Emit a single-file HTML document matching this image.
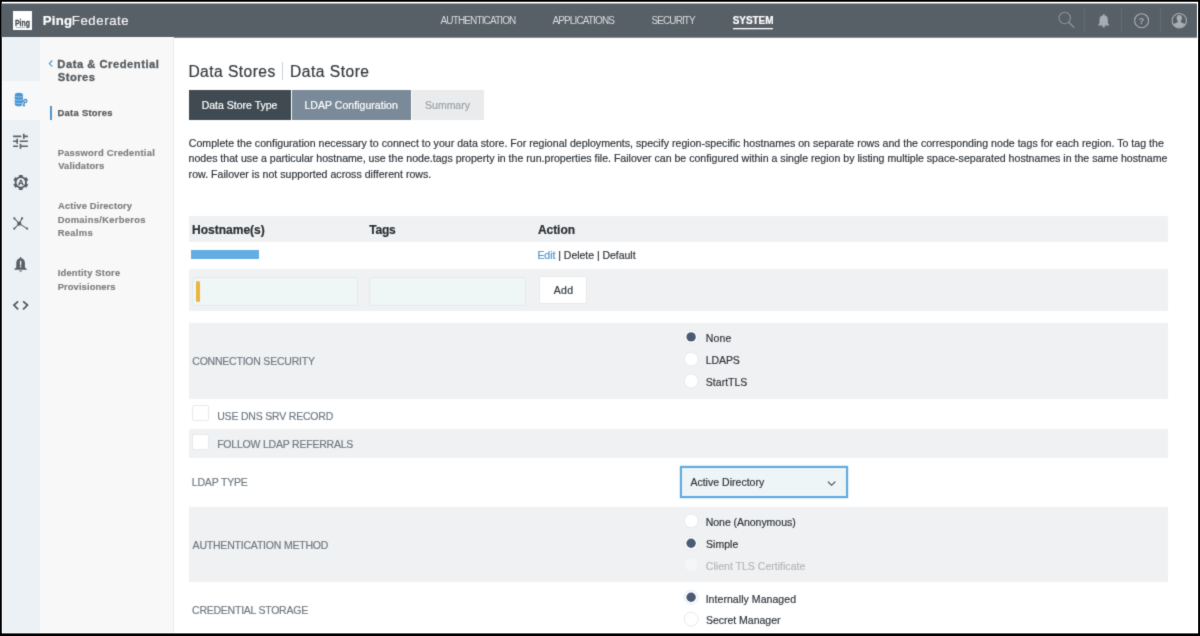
<!DOCTYPE html>
<html lang="en">
<head>
<meta charset="utf-8">
<title>PingFederate - Data Store</title>
<style>
*{box-sizing:border-box;margin:0;padding:0}
html,body{width:1200px;height:636px;overflow:hidden;background:#000}
body{font-family:"Liberation Sans",sans-serif;color:#3b434b;position:relative}
.frame{position:absolute;left:2px;top:2px;width:1196px;height:631px;background:#fff;overflow:hidden;box-shadow:-1px 0 0 rgba(255,255,255,.25),0 -1px 0 rgba(255,255,255,.25),1px 0 0 rgba(255,255,255,.15),0 1px 0 rgba(255,255,255,.4)}
.pg{position:absolute;left:-2px;top:-2px;width:1200px;height:636px;will-change:transform;background:#fff;filter:url(#soft)}
.abs{position:absolute}
.t{position:absolute;white-space:nowrap;line-height:1;-webkit-text-stroke-width:.18px}
.row{position:absolute;left:189px;width:979px;background:#f0f1f2}
.cb{position:absolute;width:16.400px;height:16px;background:#fff;border:1px solid #e6e9eb;border-radius:2px}
.inp{position:absolute;height:29.500px;background:#eff6f6;border:1px solid #e4eaec;border-radius:3px}
.tab{position:absolute;top:90px;height:30px}
.vsep{position:absolute;top:8px;width:1px;height:25px;background:#636b73}
</style>
</head>
<body>
<svg width="0" height="0" style="position:absolute"><defs><filter id="soft" x="0" y="0" width="100%" height="100%" color-interpolation-filters="sRGB"><feConvolveMatrix order="3" kernelMatrix="0.02 0.09 0.02 0.09 0.56 0.09 0.02 0.09 0.02" divisor="1" edgeMode="duplicate" preserveAlpha="true"/></filter></defs></svg>
<div class="frame"><div class="pg">
  <!-- header bar -->
  <div class="abs" style="left:0;top:4px;width:1197px;height:33px;background:#575f67;box-shadow:0 -1px 0 rgba(87,95,103,.5),0 1px 0 rgba(87,95,103,.7)"></div>
  <div class="abs" style="left:13px;top:11px;width:19px;height:19px;background:#fff;overflow:hidden">
    <div class="t" style="left:2px;top:6.500px;font-size:9.600px;font-weight:bold;color:#3f474f;-webkit-text-stroke-width:.3px;transform:scaleX(.72);transform-origin:0 0">Ping</div>
    <div class="abs" style="left:3px;top:16.300px;width:8.500px;height:1px;background:#b3b8bd"></div>
  </div>
  <div class="abs" style="left:733px;top:28px;width:40px;height:1px;background:#fff;box-shadow:0 1px 0 rgba(255,255,255,.3)"></div>
  <div class="vsep" style="left:1083.500px"></div>
  <div class="vsep" style="left:1121.200px"></div>
  <div class="vsep" style="left:1160.200px"></div>
  <svg class="abs" style="left:1050px;top:4px" width="146" height="33" viewBox="1050 4 146 33" fill="none">
    <circle cx="1064.700" cy="18" r="5.700" stroke="#8d949a" stroke-width="1.100"/>
    <path d="M1068.800 22.200L1073.800 27.200" stroke="#8d949a" stroke-width="1.300" stroke-linecap="round"/>
    <path d="M1103.700 15.200c-2.700 0-4.200 2-4.200 4.700v3.200l-1.600 2.300h11.600l-1.600-2.300v-3.200c0-2.700-1.500-4.700-4.200-4.700z" fill="#a7adb2"/>
    <rect x="1103" y="13.900" width="1.400" height="2.200" rx=".7" fill="#a7adb2"/>
    <circle cx="1103.700" cy="26.300" r="1.300" fill="#a7adb2"/>
    <circle cx="1141.600" cy="20.700" r="7" stroke="#a7adb2" stroke-width="1.100"/>
    <text x="1141.600" y="24" font-family="Liberation Sans, sans-serif" font-size="9" font-weight="bold" fill="#a7adb2" text-anchor="middle">?</text>
    <circle cx="1179.300" cy="20.700" r="7.200" stroke="#a7adb2" stroke-width="1.100"/>
    <path d="M1179.300 15.100c1.700 0 2.700 1.200 2.700 2.900 0 1.200-.5 2.300-1.200 2.900v1c.3.500 1.900.9 3.400 1.700.5.300.8.700.9 1.100-1.300 1.700-3.400 2.800-5.800 2.800s-4.500-1.100-5.800-2.800c.1-.4.400-.8.900-1.100 1.500-.8 3.100-1.200 3.400-1.700v-1c-.7-.6-1.200-1.700-1.200-2.900 0-1.700 1-2.900 2.700-2.900z" fill="#a7adb2"/>
  </svg>

  <!-- rail + side nav backgrounds -->
  <div class="abs" style="left:0;top:37.400px;width:39.500px;height:600px;background:#ebf1f5"></div>
  <div class="abs" style="left:0;top:80.500px;width:39.500px;height:39px;background:#f7f8f9"></div>
  <div class="abs" style="left:39.500px;top:37.400px;width:134.200px;height:600px;background:#f8f8f8;border-right:1.400px solid #ececec"></div>

  <!-- rail icons (page coords) -->
  <svg class="abs" style="left:0;top:80px" width="40" height="240" viewBox="0 80 40 240" fill="none">
    <path d="M14.800 94.700c0-1.050 1.850-1.900 4.100-1.900s4.100.85 4.100 1.900v9.700c0 1.050-1.850 1.900-4.100 1.900s-4.100-.85-4.100-1.900z" fill="#4696d3"/>
    <g stroke="#b5d7f1" stroke-width=".75" fill="none">
      <path d="M14.800 95.700c.4.800 2 1.300 4.100 1.300s3.700-.5 4.100-1.300"/>
      <path d="M14.800 99c.4.800 2 1.300 4.100 1.300s3.700-.5 4.100-1.300"/>
      <path d="M14.800 102.300c.4.800 2 1.300 4.100 1.300s3.700-.5 4.100-1.300"/>
    </g>
    <circle cx="25.300" cy="100.900" r="2.300" fill="#f7f8f9"/>
    <path d="M24.600 102.200l-2.100 4.600" stroke="#f7f8f9" stroke-width="2.600"/>
    <circle cx="25.300" cy="100.900" r="1.550" stroke="#4588c2" stroke-width="1.250"/>
    <path d="M24.600 102.300l-1.400 3.900M23.500 105.200l1.500.6" stroke="#4588c2" stroke-width="1.250"/>

    <!-- tune (sliders) -->
    <g transform="translate(10.600 131.400) scale(.823)">
      <path d="M3 17v2h6v-2H3zM3 5v2h10V5H3zm10 16v-2h8v-2h-8v-2h-2v6h2zM7 9v2H3v2h4v2h2V9H7zm14 4v-2H11v2h10zm-6-4h2V7h4V5h-4V3h-2v6z" fill="#5b6065"/>
    </g>

    <!-- gear with A -->
    <g transform="translate(20.800,182.400)">
      <circle r="5.200" stroke="#575c61" stroke-width="1.800"/>
      <g fill="#575c61">
        <rect x="-1.900" y="-7.500" width="3.800" height="2.400" rx=".4"/>
        <rect x="-1.900" y="-7.500" width="3.800" height="2.400" rx=".4" transform="rotate(60)"/>
        <rect x="-1.900" y="-7.500" width="3.800" height="2.400" rx=".4" transform="rotate(120)"/>
        <rect x="-1.900" y="-7.500" width="3.800" height="2.400" rx=".4" transform="rotate(180)"/>
        <rect x="-1.900" y="-7.500" width="3.800" height="2.400" rx=".4" transform="rotate(240)"/>
        <rect x="-1.900" y="-7.500" width="3.800" height="2.400" rx=".4" transform="rotate(300)"/>
      </g>
      <text x="0" y="3" font-family="Liberation Sans, sans-serif" font-size="8" font-weight="bold" fill="#575c61" stroke="#575c61" stroke-width=".3" text-anchor="middle">A</text>
    </g>

    <!-- network -->
    <g stroke="#575c61" stroke-width="1.050" stroke-linecap="round">
      <path d="M14.300 218.300L19.300 223.600M22.100 218.300L19.300 223.600M14.300 228.600L19.300 223.600M27.100 228.600L19.300 223.600"/>
    </g>
    <rect x="17.400" y="221.700" width="3.800" height="3.800" rx="1.200" fill="#575c61"/>
    <circle cx="14.300" cy="218.300" r="1.100" fill="#575c61"/><circle cx="22.100" cy="218.300" r="1.100" fill="#575c61"/>
    <circle cx="14.300" cy="228.600" r="1.100" fill="#575c61"/><circle cx="27.100" cy="228.600" r="1.100" fill="#575c61"/>

    <!-- bell alert -->
    <path d="M20.600 258.300c-2.700 0-4.300 2.100-4.300 4.700v4.500l-1.900 1.500v.700h12.400v-.7l-1.900-1.500v-4.500c0-2.600-1.600-4.700-4.300-4.700z" fill="#575c61"/>
    <rect x="19.900" y="257.100" width="1.400" height="2" rx=".7" fill="#575c61"/>
    <path d="M19.300 270.400h2.600c0 .8-.6 1.300-1.300 1.300s-1.300-.5-1.300-1.300z" fill="#575c61"/>
    <rect x="19.850" y="260.800" width="1.500" height="4.600" fill="#ebf1f5"/><rect x="19.850" y="266.100" width="1.500" height="1.300" fill="#ebf1f5"/>

    <!-- code -->
    <path d="M18.100 301.300L13.900 305.100 18.100 309.400M23.100 301.300L27.500 305.100 23.100 309.400" stroke="#4b5054" stroke-width="1.600"/>
  </svg>

  <!-- side nav decorations -->
  <svg class="abs" style="left:47px;top:59px" width="8" height="10" viewBox="47 59 8 10" fill="none"><path d="M52.300 60.500L49.300 63.600l3 3.100" stroke="#4a97d2" stroke-width="1.100"/></svg>
  <div class="abs" style="left:50.300px;top:106px;width:1.700px;height:13.500px;background:#4a97d2"></div>

  <!-- title separator -->
  <div class="abs" style="left:282.300px;top:61.700px;width:1.100px;height:18.300px;background:#cdd1d4"></div>

  <!-- tabs -->
  <div class="tab" style="left:188.800px;width:102.400px;background:#3f4a52"></div>
  <div class="tab" style="left:291.800px;width:119.200px;background:#7a8a99"></div>
  <div class="tab" style="left:411.600px;width:72.200px;background:#e9ebec"></div>

  <!-- table -->
  <div class="row" style="top:216px;height:26px"></div>
  <div class="abs" style="left:190.500px;top:250.300px;width:68.400px;height:8.800px;background:#63ade3"></div>
  <div class="row" style="top:269px;height:42px"></div>
  <div class="inp" style="left:192.300px;top:276.900px;width:165.400px"></div>
  <div class="abs" style="left:196.400px;top:281.100px;width:3.500px;height:21.100px;background:#edb53d;border-radius:1.500px"></div>
  <div class="inp" style="left:369.200px;top:276.900px;width:157.100px"></div>
  <div class="abs" style="left:538.700px;top:276.200px;width:48.800px;height:27.600px;background:#fff;border:1px solid #e7e9ea;border-radius:2px"></div>

  <!-- form rows -->
  <div class="row" style="top:323px;height:76px"></div>

  <div class="cb" style="left:192.200px;top:404.500px"></div>
  <div class="row" style="top:429px;height:29px"></div>
  <div class="cb" style="left:192.200px;top:433.500px"></div>

  <div class="abs" style="left:680px;top:466.300px;width:168.200px;height:31.700px;background:#eef5f6;border:2px solid #60aade;box-shadow:0 0 1.500px #8fc3ea"></div>
  <svg class="abs" style="left:826px;top:479px" width="12" height="9" viewBox="826 479 12 9" fill="none"><path d="M827.900 481.600L831.600 485.300 835.300 481.600" stroke="#3b434b" stroke-width="1.100"/></svg>

  <div class="row" style="top:507px;height:75px"></div>

  <svg class="abs" style="left:680px;top:320px" width="24" height="312" viewBox="680 320 24 312" fill="none">
    <circle cx="691.2" cy="336.9" r="6.900" fill="#fff" stroke="#dce7ef" stroke-width=".9"/><circle cx="691.1" cy="336.9" r="4.700" fill="#4a5b73"/>
    <circle cx="691.2" cy="359.1" r="6.900" fill="#fff" stroke="#e4e6e8" stroke-width=".9"/>
    <circle cx="691.2" cy="381.0" r="6.900" fill="#fff" stroke="#e4e6e8" stroke-width=".9"/>
    <circle cx="691.2" cy="520.9" r="6.900" fill="#fff" stroke="#e4e6e8" stroke-width=".9"/>
    <circle cx="691.2" cy="543.3" r="6.900" fill="#fff" stroke="#dce7ef" stroke-width=".9"/><circle cx="691.1" cy="543.3" r="4.700" fill="#4a5b73"/>
    <circle cx="691.2" cy="564.8" r="6.900" fill="#f5f6f7" stroke="#edeff0" stroke-width=".9"/>
    <circle cx="691.2" cy="597.3" r="6.900" fill="#fff" stroke="#dce7ef" stroke-width=".9"/><circle cx="691.1" cy="597.3" r="4.700" fill="#4a5b73"/>
    <circle cx="691.2" cy="619.1" r="6.900" fill="#fff" stroke="#e4e6e8" stroke-width=".9"/>
  </svg>
  <!-- text -->
<div class="t" style="left:42.87px;top:14.00px;font-size:13.2px;color:#fff;letter-spacing:0.215px;font-weight:bold">Ping</div>
<div class="t" style="left:71.82px;top:14.00px;font-size:13.2px;color:#f4f5f6;letter-spacing:0.584px">Federate</div>
<div class="t" style="left:440.48px;top:16.00px;font-size:10px;color:#d9dcdf;letter-spacing:-0.862px;-webkit-text-stroke-width:0">AUTHENTICATION</div>
<div class="t" style="left:552.38px;top:16.00px;font-size:10px;color:#d9dcdf;letter-spacing:-0.862px;-webkit-text-stroke-width:0">APPLICATIONS</div>
<div class="t" style="left:651.55px;top:16.00px;font-size:10px;color:#d9dcdf;letter-spacing:-0.913px;-webkit-text-stroke-width:0">SECURITY</div>
<div class="t" style="left:732.71px;top:16.00px;font-size:10px;color:#fff;letter-spacing:-0.052px;font-weight:bold">SYSTEM</div>
<div class="t" style="left:57.35px;top:59.00px;font-size:11.2px;color:#555a5e;letter-spacing:0.518px;font-weight:bold;-webkit-text-stroke:.3px #555a5e">Data &amp; Credential</div>
<div class="t" style="left:57.78px;top:72.00px;font-size:11.2px;color:#555a5e;letter-spacing:0.493px;font-weight:bold;-webkit-text-stroke:.3px #555a5e">Stores</div>
<div class="t" style="left:57.57px;top:108.00px;font-size:9.4px;color:#5a5a5a;letter-spacing:0.281px;font-weight:bold;-webkit-text-stroke:.25px #5a5a5a">Data Stores</div>
<div class="t" style="left:57.67px;top:148.00px;font-size:9.4px;color:#7d7d7d;letter-spacing:0.242px;font-weight:bold;-webkit-text-stroke:.15px #7d7d7d">Password Credential</div>
<div class="t" style="left:58.24px;top:161.00px;font-size:9.4px;color:#7d7d7d;letter-spacing:0.138px;font-weight:bold;-webkit-text-stroke:.15px #7d7d7d">Validators</div>
<div class="t" style="left:58.07px;top:201.00px;font-size:9.4px;color:#7d7d7d;letter-spacing:0.139px;font-weight:bold;-webkit-text-stroke:.15px #7d7d7d">Active Directory</div>
<div class="t" style="left:57.67px;top:215.00px;font-size:9.4px;color:#7d7d7d;letter-spacing:0.290px;font-weight:bold;-webkit-text-stroke:.15px #7d7d7d">Domains/Kerberos</div>
<div class="t" style="left:57.67px;top:228.00px;font-size:9.4px;color:#7d7d7d;letter-spacing:0.332px;font-weight:bold;-webkit-text-stroke:.15px #7d7d7d">Realms</div>
<div class="t" style="left:57.67px;top:268.00px;font-size:9.4px;color:#7d7d7d;letter-spacing:0.196px;font-weight:bold;-webkit-text-stroke:.15px #7d7d7d">Identity Store</div>
<div class="t" style="left:57.67px;top:282.00px;font-size:9.4px;color:#7d7d7d;letter-spacing:0.102px;font-weight:bold;-webkit-text-stroke:.15px #7d7d7d">Provisioners</div>
<div class="t" style="left:188.42px;top:64.00px;font-size:15.6px;color:#33383d;letter-spacing:0.450px">Data Stores</div>
<div class="t" style="left:290.02px;top:64.00px;font-size:15.6px;color:#33383d;letter-spacing:0.492px">Data Store</div>
<div class="t" style="left:201.64px;top:100.00px;font-size:10.5px;color:#fff;letter-spacing:0.011px;-webkit-text-stroke:.2px #fff">Data Store Type</div>
<div class="t" style="left:304.44px;top:100.00px;font-size:10.5px;color:#fff;letter-spacing:0.044px;-webkit-text-stroke:.2px #fff">LDAP Configuration</div>
<div class="t" style="left:425.12px;top:100.00px;font-size:10.5px;color:#9ba1a6;letter-spacing:-0.021px">Summary</div>
<div class="t" style="left:188.76px;top:138.00px;font-size:10.6px;color:#2e343a;letter-spacing:0.009px">Complete the configuration necessary to connect to your data store. For regional deployments, specify region-specific hostnames on separate rows and the corresponding node tags for each region. To tag the</div>
<div class="t" style="left:188.60px;top:153.00px;font-size:10.6px;color:#2e343a;letter-spacing:-0.005px">nodes that use a particular hostname, use the node.tags property in the run.properties file. Failover can be configured within a single region by listing multiple space-separated hostnames in the same hostname</div>
<div class="t" style="left:188.60px;top:169.00px;font-size:10.6px;color:#2e343a;letter-spacing:0.017px">row. Failover is not supported across different rows.</div>
<div class="t" style="left:192.10px;top:224.00px;font-size:12px;color:#272c31;letter-spacing:0.002px;font-weight:bold">Hostname(s)</div>
<div class="t" style="left:369.17px;top:224.00px;font-size:12px;color:#272c31;letter-spacing:-0.163px;font-weight:bold">Tags</div>
<div class="t" style="left:537.95px;top:224.00px;font-size:12px;color:#272c31;letter-spacing:-0.057px;font-weight:bold">Action</div>
<div class="t" style="left:537.39px;top:250.00px;font-size:10.5px;color:#2e343a;letter-spacing:-0.030px"><span style="color:#4a93cf">Edit</span> | Delete | Default</div>
<div class="t" style="left:553.73px;top:285.00px;font-size:10.5px;color:#2e343a;letter-spacing:0.382px">Add</div>
<div class="t" style="left:192.27px;top:356.00px;font-size:10.5px;color:#6f7981;letter-spacing:-0.218px">CONNECTION SECURITY</div>
<div class="t" style="left:217.19px;top:411.00px;font-size:10.5px;color:#6f7981;letter-spacing:-0.194px">USE DNS SRV RECORD</div>
<div class="t" style="left:217.14px;top:439.00px;font-size:10.5px;color:#6f7981;letter-spacing:-0.209px">FOLLOW LDAP REFERRALS</div>
<div class="t" style="left:191.74px;top:477.00px;font-size:10.5px;color:#6f7981;letter-spacing:-0.157px">LDAP TYPE</div>
<div class="t" style="left:192.58px;top:540.00px;font-size:10.5px;color:#6f7981;letter-spacing:-0.199px">AUTHENTICATION METHOD</div>
<div class="t" style="left:192.07px;top:605.00px;font-size:10.5px;color:#6f7981;letter-spacing:-0.241px">CREDENTIAL STORAGE</div>
<div class="t" style="left:705.84px;top:333.00px;font-size:10.5px;color:#2e343a;letter-spacing:0.142px">None</div>
<div class="t" style="left:705.84px;top:355.00px;font-size:10.5px;color:#2e343a;letter-spacing:-0.122px">LDAPS</div>
<div class="t" style="left:705.82px;top:377.00px;font-size:10.5px;color:#2e343a;letter-spacing:0.018px">StartTLS</div>
<div class="t" style="left:690.38px;top:477.00px;font-size:10.5px;color:#2e343a;letter-spacing:0.022px">Active Directory</div>
<div class="t" style="left:705.74px;top:517.00px;font-size:10.5px;color:#2e343a;letter-spacing:-0.037px">None (Anonymous)</div>
<div class="t" style="left:705.92px;top:539.00px;font-size:10.5px;color:#2e343a;letter-spacing:0.070px">Simple</div>
<div class="t" style="left:705.87px;top:561.00px;font-size:10.5px;color:#b3b8bc;letter-spacing:0.019px">Client TLS Certificate</div>
<div class="t" style="left:705.63px;top:594.00px;font-size:10.5px;color:#2e343a;letter-spacing:0.061px">Internally Managed</div>
<div class="t" style="left:705.92px;top:615.00px;font-size:10.5px;color:#2e343a;letter-spacing:-0.012px">Secret Manager</div>
</div></div>
</body>
</html>
